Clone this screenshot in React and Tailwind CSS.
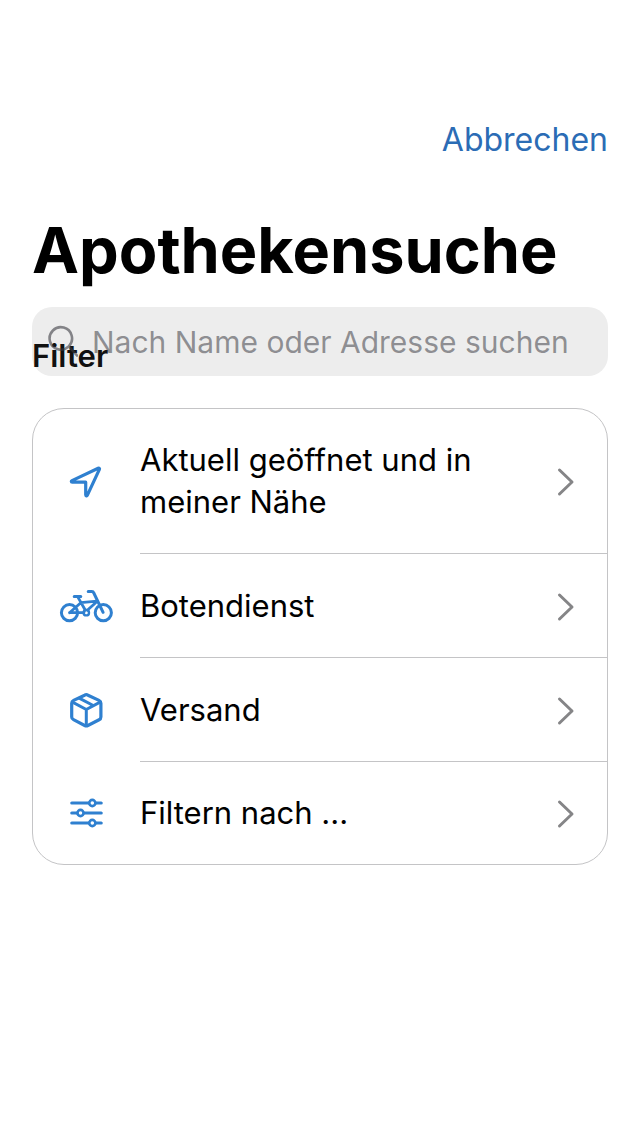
const stroke = {
  fill: 'none',
  stroke: 'currentColor',
  strokeWidth: 3,
  strokeLinecap: 'round',
  strokeLinejoin: 'round',
};

function Glyph({ children }) {
  return (
    <svg viewBox="0 0 55 40" className="h-10 w-[55px]" aria-hidden="true" {...stroke}>
      {children}
    </svg>
  );
}

const LocationIcon = () => (
  <Glyph>
    <path d="M13 18.6 39.2 6.2c.9-.4 1.6.3 1.2 1.2L28.4 33.2c-.5 1.1-1.7.8-1.7-.4V20.2H13.2c-1.1 0-1.2-1.1-.2-1.6Z" strokeWidth="3.2" />
  </Glyph>
);

const BikeIcon = () => (
  <Glyph>
    <circle cx="10.5" cy="26.7" r="8.1" />
    <circle cx="44.3" cy="26.7" r="8.1" />
    <circle cx="27.3" cy="26.7" r="2.7" strokeWidth="2.4" />
    <path d="M15.2 10.6h6.6M29.2 5.6h3.6c1 0 1.7.5 2 1.4l9.3 19.3" />
    <path d="M18.6 10.6 26.2 24M10.5 26.7l11.3-10 16.4-1.5M28.6 24l9.4-8.5M10.5 26.7H25" strokeWidth="2.8" />
  </Glyph>
);

const BoxIcon = () => (
  <Glyph>
    <path d="M25.6 5.2c1-.6 2.4-.6 3.4 0l11 5.2c1.2.6 1.9 1.4 1.9 2.8v13.7c0 1.3-.6 2.2-1.8 2.8l-11.2 5.8c-1 .5-2.2.5-3.2 0l-11.2-5.8c-1.2-.6-1.8-1.5-1.8-2.8V13.2c0-1.4.7-2.2 1.9-2.8Z" strokeWidth="3.2" />
    <path d="m13.5 12.2 13.8 7.3 13.8-7.3M27.3 19.5V35M20.2 8.2l14 7.3" />
  </Glyph>
);

const SlidersIcon = () => (
  <Glyph>
    <path d="M12.8 10h17M37 10h5.2M12.8 20h5.4M25 20h17.2M12.8 30h17M37 30h5.2" strokeWidth="3.2" />
    <circle cx="33.3" cy="10" r="3.1" strokeWidth="2.6" />
    <circle cx="21.5" cy="20" r="3.1" strokeWidth="2.6" />
    <circle cx="33.3" cy="30" r="3.1" strokeWidth="2.6" />
  </Glyph>
);

const filters = [
  { label: 'Aktuell geöffnet und in meiner Nähe', Icon: LocationIcon },
  { label: 'Botendienst', Icon: BikeIcon },
  { label: 'Versand', Icon: BoxIcon },
  { label: 'Filtern nach ...', Icon: SlidersIcon },
];

function FilterRow({ label, Icon }) {
  return (
    <li className="group">
      <button type="button" className="flex w-full items-stretch text-left">
        <span className="flex w-[107px] shrink-0 items-center justify-center text-[#2f80d0]">
          <Icon />
        </span>
        <span className="flex min-h-[104px] grow items-center justify-between border-b border-[#c4c4c6] py-[30px] pr-8 group-last:min-h-[102px] group-last:border-b-0">
          <span className="max-w-[350px] text-[31px] leading-[42px] text-black">{label}</span>
          <svg viewBox="0 0 18 30" className="mt-0.5 h-[30px] w-[18px] shrink-0 text-[#858587]" aria-hidden="true" {...stroke}>
            <path d="m2.5 3 12.5 12L2.5 27" />
          </svg>
        </span>
      </button>
    </li>
  );
}

export default function App() {
  return (
    <main className="min-h-screen bg-white px-8 pt-[120px] font-['Inter',sans-serif] text-black">
      <div className="flex justify-end">
        <button type="button" className="text-[32px] leading-10 text-[#2b6cb5]">
          Abbrechen
        </button>
      </div>

      <h1 className="mt-[50px] text-[63px] leading-[80px] font-bold">Apothekensuche</h1>

      <section>
        <div className="relative mt-[17px] rounded-[20px] bg-[#ededed]">
          <h2 className="pointer-events-none absolute top-[29px] left-0 text-[31px] leading-10 font-semibold text-[#111111]">
            Filter
          </h2>
          <label className="relative flex h-[69px] items-center gap-[14px] px-4">
            <svg viewBox="0 0 30 34" className="h-[34px] w-[30px] shrink-0 text-[#3c3c43]/60" aria-hidden="true" {...stroke} strokeWidth="2.6">
              <path d="M20.7 21.4a11.2 11.2 0 1 1 .1-.1l8.2 9.2" />
            </svg>
            <input
              type="search"
              aria-label="Apotheke suchen"
              placeholder="Nach Name oder Adresse suchen"
              className="min-w-0 grow bg-transparent text-[30px] leading-10 outline-none placeholder:text-[#3c3c43]/55"
            />
          </label>
        </div>

        <ul className="mt-8 overflow-hidden rounded-[32px] border border-[#c4c4c6] bg-white">
          {filters.map((filter) => (
            <FilterRow key={filter.label} {...filter} />
          ))}
        </ul>
      </section>
    </main>
  );
}
